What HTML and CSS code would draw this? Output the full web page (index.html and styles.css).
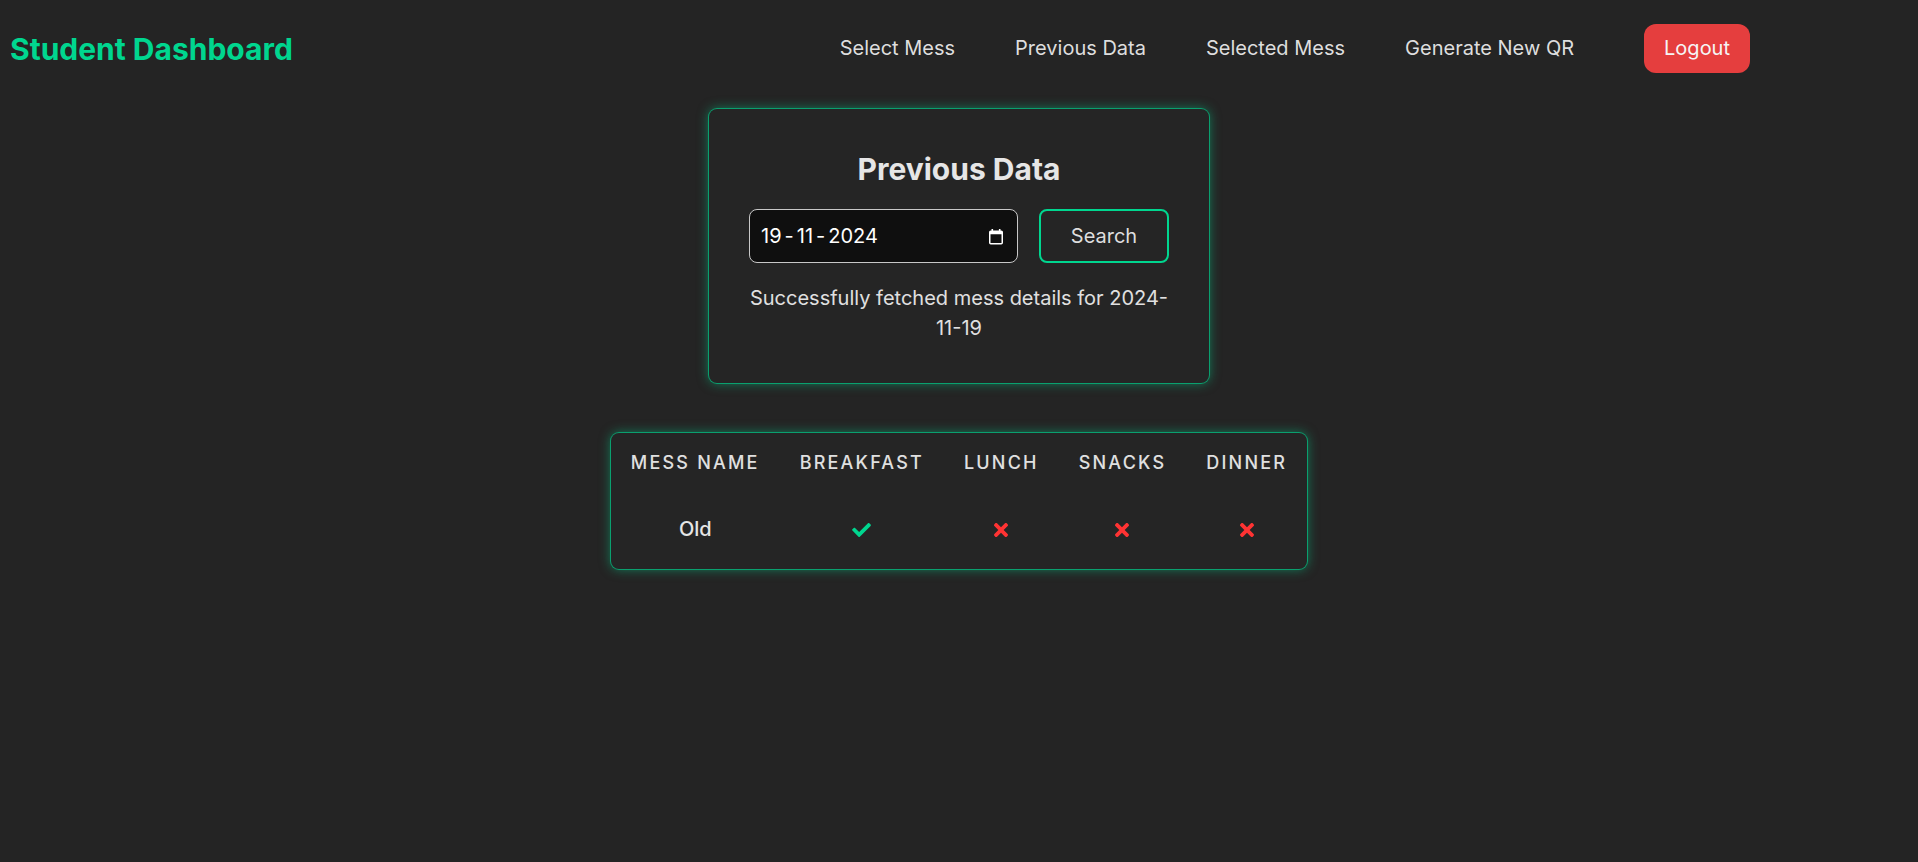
FILE: index.html
```html
<!DOCTYPE html>
<html lang="en">
<head>
<meta charset="utf-8">
<title>Student Dashboard</title>
<link rel="stylesheet" href="styles.css">
</head>
<body>
<header class="topbar">
  <div class="brand">Student Dashboard</div>
  <nav class="nav">
    <a class="nav-link" href="#">Select Mess</a>
    <a class="nav-link" href="#">Previous Data</a>
    <a class="nav-link" href="#">Selected Mess</a>
    <a class="nav-link" href="#">Generate New QR</a>
    <button class="logout" type="button">Logout</button>
  </nav>
</header>
<main class="content">
  <section class="card">
    <h2 class="card-title">Previous Data</h2>
    <div class="search-row">
      <div class="date-field">
        <span class="date-value">19<span class="sep">-</span>11<span class="sep">-</span>2024</span>
        <svg class="cal-icon" width="16" height="17" viewBox="0 0 16 17" aria-hidden="true">
          <rect x="1.75" y="3.25" width="12.5" height="12.5" rx="1" fill="none" stroke="#ffffff" stroke-width="1.5"/>
          <rect x="1.75" y="3.25" width="12.5" height="3" fill="#ffffff"/>
          <rect x="3.5" y="1" width="1.6" height="3" fill="#ffffff"/>
          <rect x="10.9" y="1" width="1.6" height="3" fill="#ffffff"/>
        </svg>
      </div>
      <button class="btn-search" type="button">Search</button>
    </div>
    <p class="message">Successfully fetched mess details for 2024-11-19</p>
  </section>

  <section class="table-card">
    <table class="mess-table">
      <thead>
        <tr>
          <th>Mess Name</th>
          <th>Breakfast</th>
          <th>Lunch</th>
          <th>Snacks</th>
          <th>Dinner</th>
        </tr>
      </thead>
      <tbody>
        <tr>
          <td>Old</td>
          <td><svg class="ico" width="19" height="14" viewBox="0 65 512 382" aria-hidden="true"><path fill="#00d68f" d="M173.898 439.404l-166.4-166.4c-9.997-9.997-9.997-26.206 0-36.204l36.203-36.204c9.997-9.998 26.207-9.998 36.204 0L192 312.69 432.095 72.596c9.997-9.997 26.207-9.997 36.204 0l36.203 36.204c9.997 9.997 9.997 26.206 0 36.204l-294.4 294.401c-9.998 9.997-26.207 9.997-36.204-.001z"/></svg></td>
          <td><svg class="ico" width="14" height="14" viewBox="0 80 352 352" aria-hidden="true"><path fill="#ff3333" d="M242.72 256l100.07-100.07c12.28-12.28 12.28-32.19 0-44.48l-22.24-22.24c-12.28-12.28-32.19-12.28-44.48 0L176 189.28 75.930 89.21c-12.28-12.28-32.19-12.28-44.48 0L9.21 111.45c-12.28 12.28-12.28 32.19 0 44.48L109.28 256 9.21 356.07c-12.280 12.28-12.28 32.19 0 44.48l22.24 22.24c12.28 12.28 32.2 12.28 44.48 0L176 322.72l100.07 100.07c12.28 12.28 32.2 12.28 44.48 0l22.24-22.24c12.28-12.28 12.28-32.19 0-44.48L242.72 256z"/></svg></td>
          <td><svg class="ico" width="14" height="14" viewBox="0 80 352 352" aria-hidden="true"><path fill="#ff3333" d="M242.72 256l100.07-100.07c12.28-12.28 12.28-32.19 0-44.48l-22.24-22.24c-12.28-12.28-32.19-12.28-44.48 0L176 189.28 75.930 89.21c-12.28-12.28-32.19-12.28-44.48 0L9.21 111.45c-12.28 12.28-12.28 32.19 0 44.48L109.28 256 9.21 356.07c-12.280 12.28-12.28 32.19 0 44.48l22.24 22.24c12.28 12.28 32.2 12.28 44.48 0L176 322.72l100.07 100.07c12.28 12.28 32.2 12.28 44.48 0l22.24-22.24c12.28-12.28 12.28-32.19 0-44.48L242.72 256z"/></svg></td>
          <td><svg class="ico" width="14" height="14" viewBox="0 80 352 352" aria-hidden="true"><path fill="#ff3333" d="M242.72 256l100.07-100.07c12.28-12.28 12.28-32.19 0-44.48l-22.24-22.24c-12.28-12.28-32.19-12.28-44.48 0L176 189.28 75.930 89.21c-12.28-12.28-32.19-12.28-44.48 0L9.21 111.45c-12.28 12.28-12.28 32.19 0 44.48L109.28 256 9.21 356.07c-12.280 12.28-12.28 32.19 0 44.48l22.24 22.24c12.28 12.28 32.2 12.28 44.48 0L176 322.72l100.07 100.07c12.28 12.28 32.2 12.28 44.48 0l22.24-22.24c12.28-12.28 12.28-32.19 0-44.48L242.72 256z"/></svg></td>
        </tr>
      </tbody>
    </table>
  </section>
</main>
</body>
</html>
```

FILE: styles.css
```css
* {
  box-sizing: border-box;
}

html, body {
  margin: 0;
  padding: 0;
}

body {
  background: #242424;
  color: rgba(255, 255, 255, 0.87);
  font-family: Inter, "Noto Sans", "Liberation Sans", sans-serif;
  min-height: 862px;
}

.topbar {
  display: flex;
  align-items: center;
  height: 97px;
  padding: 0 168px 0 10px;
}

.brand {
  font-size: 30px;
  font-weight: 700;
  line-height: 1;
  color: #00d68f;
}

.nav {
  margin-left: auto;
  display: flex;
  align-items: center;
  gap: 60px;
}

.nav-link {
  font-size: 20px;
  line-height: 29px;
  color: #dedede;
  text-decoration: none;
}

.logout {
  margin-left: 10px;
  background: #e53e3e;
  color: #f5f5f5;
  border: none;
  border-radius: 12px;
  padding: 10px 20px;
  font-family: inherit;
  font-size: 20px;
  line-height: 29px;
  font-weight: 400;
}

.content {
  display: flex;
  flex-direction: column;
  align-items: center;
  gap: 50px;
  padding-top: 12px;
}

.card {
  width: 500px;
  padding: 40px;
  background: #252525;
  border-radius: 8px;
  box-shadow: 0 0 0 1px rgba(0, 214, 143, 0.6), 0 0 12px rgba(0, 214, 143, 0.55);
  text-align: center;
}

.card-title {
  margin: 0 0 20px;
  font-size: 30px;
  line-height: 40px;
  font-weight: 700;
  color: #e6e6e6;
}

.search-row {
  display: flex;
  justify-content: center;
  gap: 21px;
}

.date-field {
  width: 269px;
  height: 54px;
  display: flex;
  align-items: center;
  justify-content: space-between;
  padding: 0 13px 0 11px;
  background: #0f0f0f;
  border: 1px solid #c8c8c8;
  border-radius: 8px;
  font-size: 20px;
  color: #ffffff;
}

.sep {
  margin: 0 3px;
}

.cal-icon {
  display: block;
}

.btn-search {
  width: 130px;
  height: 54px;
  background: transparent;
  border: 2px solid #00d68f;
  border-radius: 8px;
  color: #dedede;
  font-family: inherit;
  font-size: 20px;
  font-weight: 400;
}

.message {
  margin: 20px 0 0;
  font-size: 20px;
  line-height: 30px;
  color: #e0e0e0;
}

.table-card {
  background: #252525;
  border-radius: 8px;
  box-shadow: 0 0 0 1px rgba(0, 214, 143, 0.6), 0 0 12px rgba(0, 214, 143, 0.55);
  overflow: hidden;
}

.mess-table {
  border-collapse: collapse;
}

.mess-table th {
  padding: 16px 20px 15px;
  font-size: 18px;
  line-height: 27px;
  font-weight: 500;
  letter-spacing: 2.2px;
  text-transform: uppercase;
  color: #e0e0e0;
  text-align: center;
}

.mess-table td {
  padding: 25px 20px 26px;
  font-size: 20px;
  line-height: 27px;
  font-weight: 500;
  color: #e6e6e6;
  text-align: center;
}

.ico {
  display: inline-block;
  vertical-align: -1px;
}
```
